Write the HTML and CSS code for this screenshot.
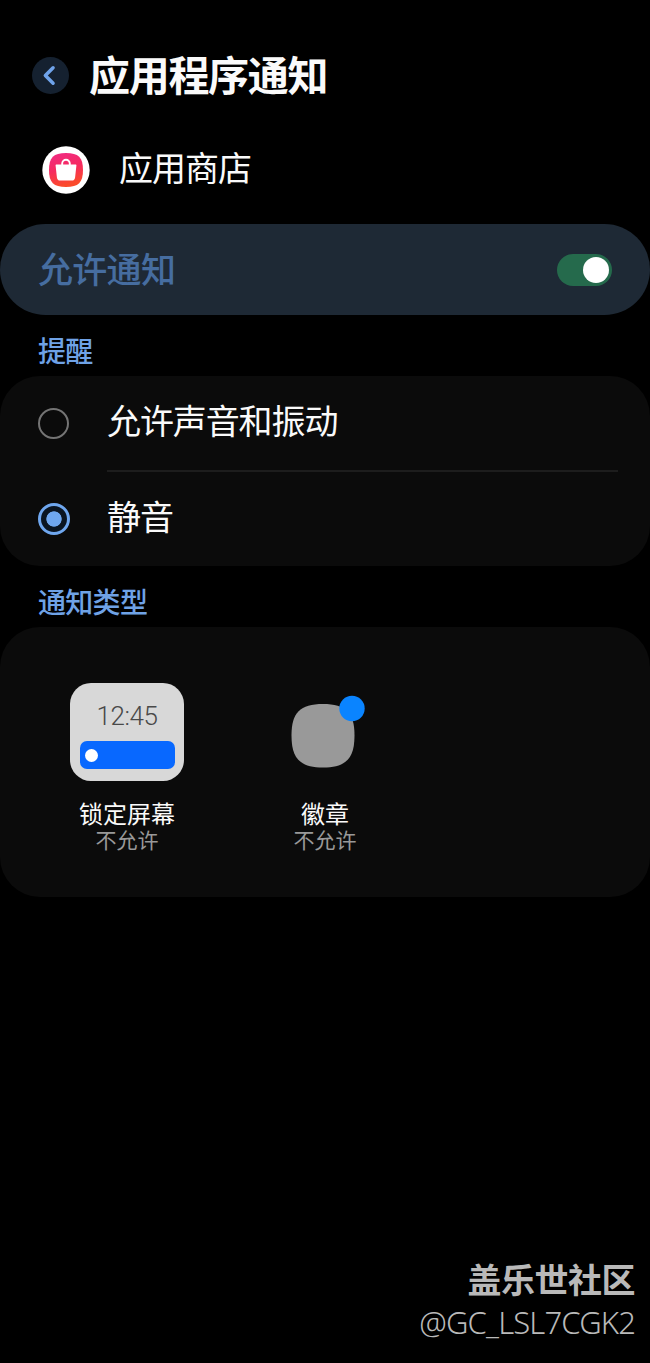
FILE: index.html
```html
<!DOCTYPE html>
<html lang="zh-CN">
<head>
<meta charset="utf-8">
<title>应用程序通知</title>
<link rel="stylesheet" href="styles.css">
</head>
<body>
<main class="screen">
  <header class="header">
    <svg class="back" viewBox="0 0 36 36"><circle cx="18" cy="18" r="18"/><path d="M20.500 10.500 13 18l7.500 7.500"/></svg>
    <h1 class="title">应用程序通知</h1>
  </header>
  <section class="app">
    <svg class="app-icon" viewBox="0 0 48 48">
      <defs><linearGradient id="store" x1="0" y1="0" x2=".25" y2="1"><stop offset="0" stop-color="#f02a86"/><stop offset=".55" stop-color="#f62b5e"/><stop offset="1" stop-color="#fb4b2b"/></linearGradient></defs>
      <circle cx="24" cy="24" r="23.7" fill="#fff"/>
      <path d="M24 7C36.500 7 41 11.500 41 24S36.500 41 24 41 7 36.500 7 24 11.500 7 24 7Z" fill="url(#store)"/>
      <path d="M20.200 20v-2.500a3.800 3.800 0 0 1 7.600 0V20" fill="none" stroke="#fff" stroke-width="1.900"/>
      <path d="M14.500 18.500h19c.6 0 1 .4.900 1l-1.300 12c-.2 1.900-1.400 3.100-3.100 3.100H18c-1.700 0-2.900-1.200-3.100-3.100l-1.300-12c-.1-.6.300-1 .9-1Z" fill="#fff"/>
    </svg>
    <span class="app-name">应用商店</span>
  </section>
  <section class="allow"><span class="allow-label">允许通知</span><span class="switch"><span class="knob"></span></span></section>
  <h2 class="section-title">提醒</h2>
  <section class="card alerts">
    <div class="option"><span class="radio"></span><span class="option-label">允许声音和振动</span></div>
    <div class="divider"></div>
    <div class="option"><span class="radio radio-on"></span><span class="option-label">静音</span></div>
  </section>
  <h2 class="section-title types-title">通知类型</h2>
  <section class="card types">
    <div class="type">
      <div class="preview"><div class="lock"><span class="clock">12:45</span><span class="bar"><span class="dot"></span></span></div></div>
      <span class="type-name">锁定屏幕</span><span class="type-state">不允许</span>
    </div>
    <div class="type">
      <div class="preview"><svg class="badge" viewBox="0 0 76 74"><path d="M34 10C57 10 65.500 18.500 65.500 41.500S57 73.500 34 73.500 2.500 64.500 2.500 41.500 11 10 34 10Z" fill="#999"/><circle cx="63" cy="14.500" r="12.700" fill="#0a84ff"/></svg></div>
      <span class="type-name">徽章</span><span class="type-state">不允许</span>
    </div>
  </section>
  <footer class="credit"><span class="community">盖乐世社区</span><span class="user">@GC_LSL7CGK2</span></footer>
</main>
</body>
</html>
```
FILE: styles.css
```css
* { box-sizing: border-box; }
body { margin: 0; background: #000; color: #fafafa; font-family: "Noto Sans CJK SC", sans-serif; }
.screen { width: 650px; height: 1363px; display: flex; flex-direction: column; overflow: hidden; }
.header { height: 136px; padding: 44px 0 0 32px; display: flex; align-items: flex-start; gap: 20px; }
.back { width: 37px; height: 37px; margin-top: 13px; }
.back circle { fill: #152130; }
.back path { fill: none; stroke: #6fa3ea; stroke-width: 3.400; stroke-linecap: round; stroke-linejoin: round; }
.title { margin: 0; font-size: 41px; line-height: 58px; font-weight: 700; letter-spacing: -1.300px; }
.app { height: 88px; padding: 10px 0 0 42px; display: flex; align-items: flex-start; gap: 29px; }
.app-icon { width: 48px; height: 48px; }
.app-name { font-size: 34px; line-height: 42px; letter-spacing: -1px; }
.allow { height: 91px; border-radius: 46px; background: #1e2935; padding: 0 38px; display: flex; align-items: center; justify-content: space-between; }
.allow-label { padding-bottom: 4px; color: #466da0; font-size: 35px; line-height: 50px; font-weight: 500; letter-spacing: -.7px; }
.switch { width: 55px; height: 32px; border-radius: 16px; background: #256a4c; padding: 3px; display: flex; justify-content: flex-end; align-items: center; }
.knob { width: 26px; height: 26px; border-radius: 50%; background: #fff; }
.section-title { margin: 0; height: 61px; padding: 15px 0 0 38px; font-size: 28px; line-height: 40px; font-weight: 500; color: #6fa2e6; letter-spacing: -.7px; }
.card { background: #0b0b0b; border-radius: 40px; }
.alerts { height: 190px; display: flex; flex-direction: column; }
.option { height: 94px; padding-left: 38px; display: flex; align-items: center; gap: 38px; }
.radio { width: 31px; height: 31px; border: 2px solid #747474; border-radius: 50%; }
.radio-on { width: 32px; height: 32px; border: 3px solid #6fa7ef; background: radial-gradient(circle, #6fa7ef 7.300px, #0a1522 8px); margin-right: -1px; }
.option-label { padding-bottom: 6px; font-size: 34px; line-height: 44px; letter-spacing: -1.100px; }
.divider { height: 2px; margin: 0 32px 0 107px; background: #1d1d1d; }
.types { height: 270px; padding: 56px 0 0 28px; display: flex; }
.type { width: 198px; display: flex; flex-direction: column; align-items: center; }
.preview { height: 98px; display: flex; justify-content: center; }
.lock { width: 114px; height: 98px; padding: 20px 10px 0; border-radius: 21px; background: #d8d8d8; display: flex; flex-direction: column; align-items: center; }
.clock { height: 38px; font-family: Roboto, sans-serif; font-weight: 300; font-size: 26px; line-height: 27px; letter-spacing: -.4px; color: #494949; }
.bar { width: 95px; height: 28px; padding-left: 5px; border-radius: 7px; background: #0868ff; display: flex; align-items: center; }
.dot { width: 13px; height: 13px; border-radius: 50%; background: #fff; }
.badge { width: 76px; height: 74px; margin: 11px 0 0 4px; }
.type-name { margin-top: 18px; font-size: 24px; line-height: 27px; }
.type-state { margin-top: 1px; font-size: 21px; line-height: 24px; color: #999; }
.credit { margin-top: auto; padding: 0 15px 20px; display: flex; flex-direction: column; align-items: flex-end; color: #b9b9b9; }
.community { font-size: 34px; line-height: 44px; font-weight: 700; letter-spacing: -.5px; }
.user { font-family: "Noto Sans", sans-serif; font-size: 31px; line-height: 42px; font-weight: 300; letter-spacing: -.85px; }
```
